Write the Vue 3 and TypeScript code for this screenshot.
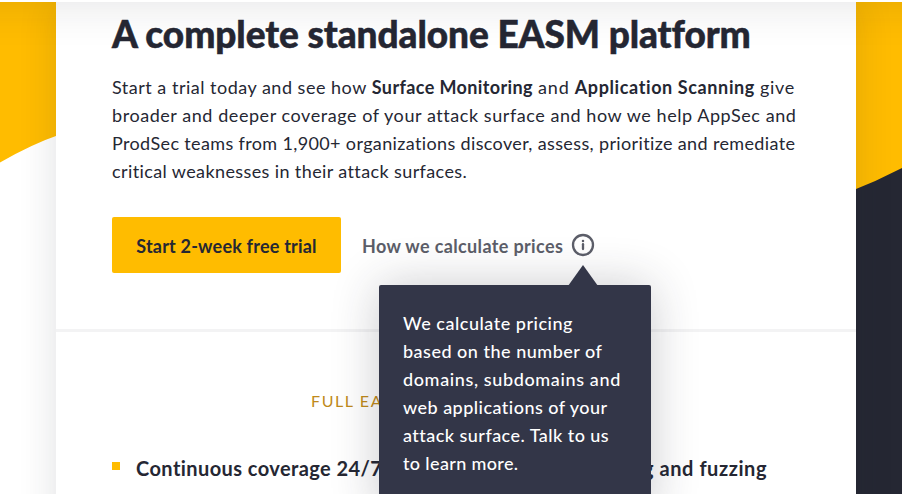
<script setup lang="ts">
interface Line { id: string; text: string }

const tooltip: Line[] = [
  { id: 't1', text: 'We calculate pricing' },
  { id: 't2', text: 'based on the number of' },
  { id: 't3', text: 'domains, subdomains and' },
  { id: 't4', text: 'web applications of your' },
  { id: 't5', text: 'attack surface. Talk to us' },
  { id: 't6', text: 'to learn more.' },
]
</script>

<template>
  <main class="page">
    <svg class="backdrop" viewBox="0 0 902 494" aria-hidden="true">
      <path fill="#ffbc00" d="M0 0H60V134.5Q32 144 0 162.500Z" />
      <path fill="#ffbc00" d="M850 0H902V200H850Z" />
      <path fill="#252733" d="M850 191.500Q876 181.500 902 168V494H850Z" />
    </svg>

    <div class="card">
      <section class="intro">
        <h1>A complete standalone EASM platform</h1>
        <p class="lead">
          <span class="line l1"><span class="a">Start a trial today and see how</span> <b class="sm">Surface Monitoring</b> <span class="c">and</span> <b class="as">Application Scanning</b> <span class="d">give</span></span>
          <span class="line l2">broader and deeper coverage of your attack surface and how we help AppSec and</span>
          <span class="line l3">ProdSec teams from 1,900+ organizations discover, assess, prioritize and remediate</span>
          <span class="line l4">critical weaknesses in their attack surfaces.</span>
        </p>
        <div class="actions">
          <button class="cta" type="button">Start 2-week free trial</button>
          <div class="prices">
            <span>How we calculate prices</span>
            <div class="info">
              <svg width="24" height="24" viewBox="0 0 24 24" aria-hidden="true">
                <circle cx="12" cy="12" r="10" fill="none" stroke="#5c5e69" stroke-width="2.300" />
                <circle cx="12" cy="7.900" r="1.250" fill="#5c5e69" />
                <path d="M12 11.200V16" stroke="#5c5e69" stroke-width="2.300" stroke-linecap="round" />
              </svg>
              <div class="tip">
                <svg class="arrow" width="30" height="21" viewBox="0 0 30 21" aria-hidden="true">
                  <path d="M15 0L30 21H0Z" fill="#333648" />
                </svg>
                <span v-for="l in tooltip" :key="l.id" class="line" :class="l.id">{{ l.text }}</span>
              </div>
            </div>
          </div>
        </div>
      </section>

      <section class="features">
        <h2>FULL EA</h2>
        <ul>
          <li><i></i><span class="f1">Continuous coverage 24/7</span></li>
          <li><span class="f2">g and fuzzing</span></li>
        </ul>
      </section>
    </div>
    <div class="header-edge"></div>
  </main>
</template>

<style>
body { background: #fff; overflow: hidden; }
</style>

<style scoped>
.page {
  position: relative;
  width: 902px;
  height: 494px;
  overflow: hidden;
  color: #252733;
  font-family: Lato, sans-serif;
  font-size: 18px;
  line-height: 28px;
  font-variant-ligatures: none;
}
.backdrop { position: absolute; inset: 0; width: 902px; height: 494px; }
.header-edge {
  position: absolute;
  top: -60px;
  left: -60px;
  right: -60px;
  height: 62px;
  background: #fff;
  box-shadow: 0 0 48px rgba(30, 30, 40, 0.13);
}
.card {
  position: relative;
  width: 800px;
  height: 560px;
  margin: 0 auto 0 56px;
  background: #fff;
  box-shadow: 0 0 36px rgba(37, 39, 51, 0.14);
}
.intro {
  box-sizing: border-box;
  height: 332px;
  padding: 12px 56px 0;
  border-bottom: 3px solid #f3f3f4;
}
h1 {
  margin: 0;
  font-size: 37px;
  line-height: 44px;
  font-weight: 900;
  letter-spacing: -0.07px;
  -webkit-text-stroke: 0.5px #252733;
  white-space: nowrap;
}
.lead { margin: 17px 0 0; }
.line { display: block; white-space: nowrap; }
.l1 { display: flex; gap: 5px; }
.a { letter-spacing: 0.5px; }
.sm { letter-spacing: 0.38px; }
.c { letter-spacing: 0.9px; }
.as { letter-spacing: 0.61px; }
.d { letter-spacing: 0.7px; }
.l2 { letter-spacing: 0.56px; }
.l3 { letter-spacing: 0.36px; }
.l4 { letter-spacing: 0.39px; }
.actions { display: flex; align-items: center; gap: 21px; margin: 32px 0 0; }
.cta {
  width: 229px;
  height: 56px;
  padding: 1px 0 0;
  border: 0;
  border-radius: 2px;
  background: #ffbc00;
  color: #252733;
  font: 700 18px/28px Lato, sans-serif;
  letter-spacing: 0.2px;
  font-variant-ligatures: none;
  white-space: nowrap;
}
.prices {
  display: flex;
  align-items: center;
  color: #5c5e69;
  font-weight: 700;
  letter-spacing: 0.36px;
  white-space: nowrap;
}
.prices > span { width: 209px; padding-top: 1px; }
.info { position: relative; display: flex; }
.tip {
  position: absolute;
  z-index: 2;
  top: 52px;
  left: -192px;
  box-sizing: border-box;
  width: 272px;
  height: 230px;
  padding: 24px 24px 0;
  border-radius: 2px;
  background: #333648;
  color: #fff;
  font-weight: 500;
  box-shadow: 0 0 48px rgba(37, 39, 51, 0.24);
}
.arrow { position: absolute; top: -20px; left: 189px; }
.t1 { letter-spacing: 0.52px; }
.t2 { letter-spacing: 0.5px; }
.t3 { letter-spacing: 0.63px; }
.t4 { letter-spacing: 0.47px; }
.t5 { letter-spacing: 0.46px; }
.t6 { letter-spacing: 0.36px; }
.features { padding: 55px 56px 0; }
h2 {
  margin: 0 0 0 199px;
  font-size: 16px;
  line-height: 28px;
  font-weight: 400;
  letter-spacing: 1.6px;
  color: #c08a1a;
}
ul {
  display: flex;
  justify-content: space-between;
  margin: 39px 33px 0 0;
  padding: 0;
  list-style: none;
  font-size: 20px;
  font-weight: 700;
  white-space: nowrap;
}
li { display: flex; align-items: center; }
i { width: 8px; height: 8px; margin: -4px 16px 0 0; background: #ffbc00; }
.f1 { letter-spacing: 0.42px; }
.f2 { letter-spacing: 0.55px; }
</style>
